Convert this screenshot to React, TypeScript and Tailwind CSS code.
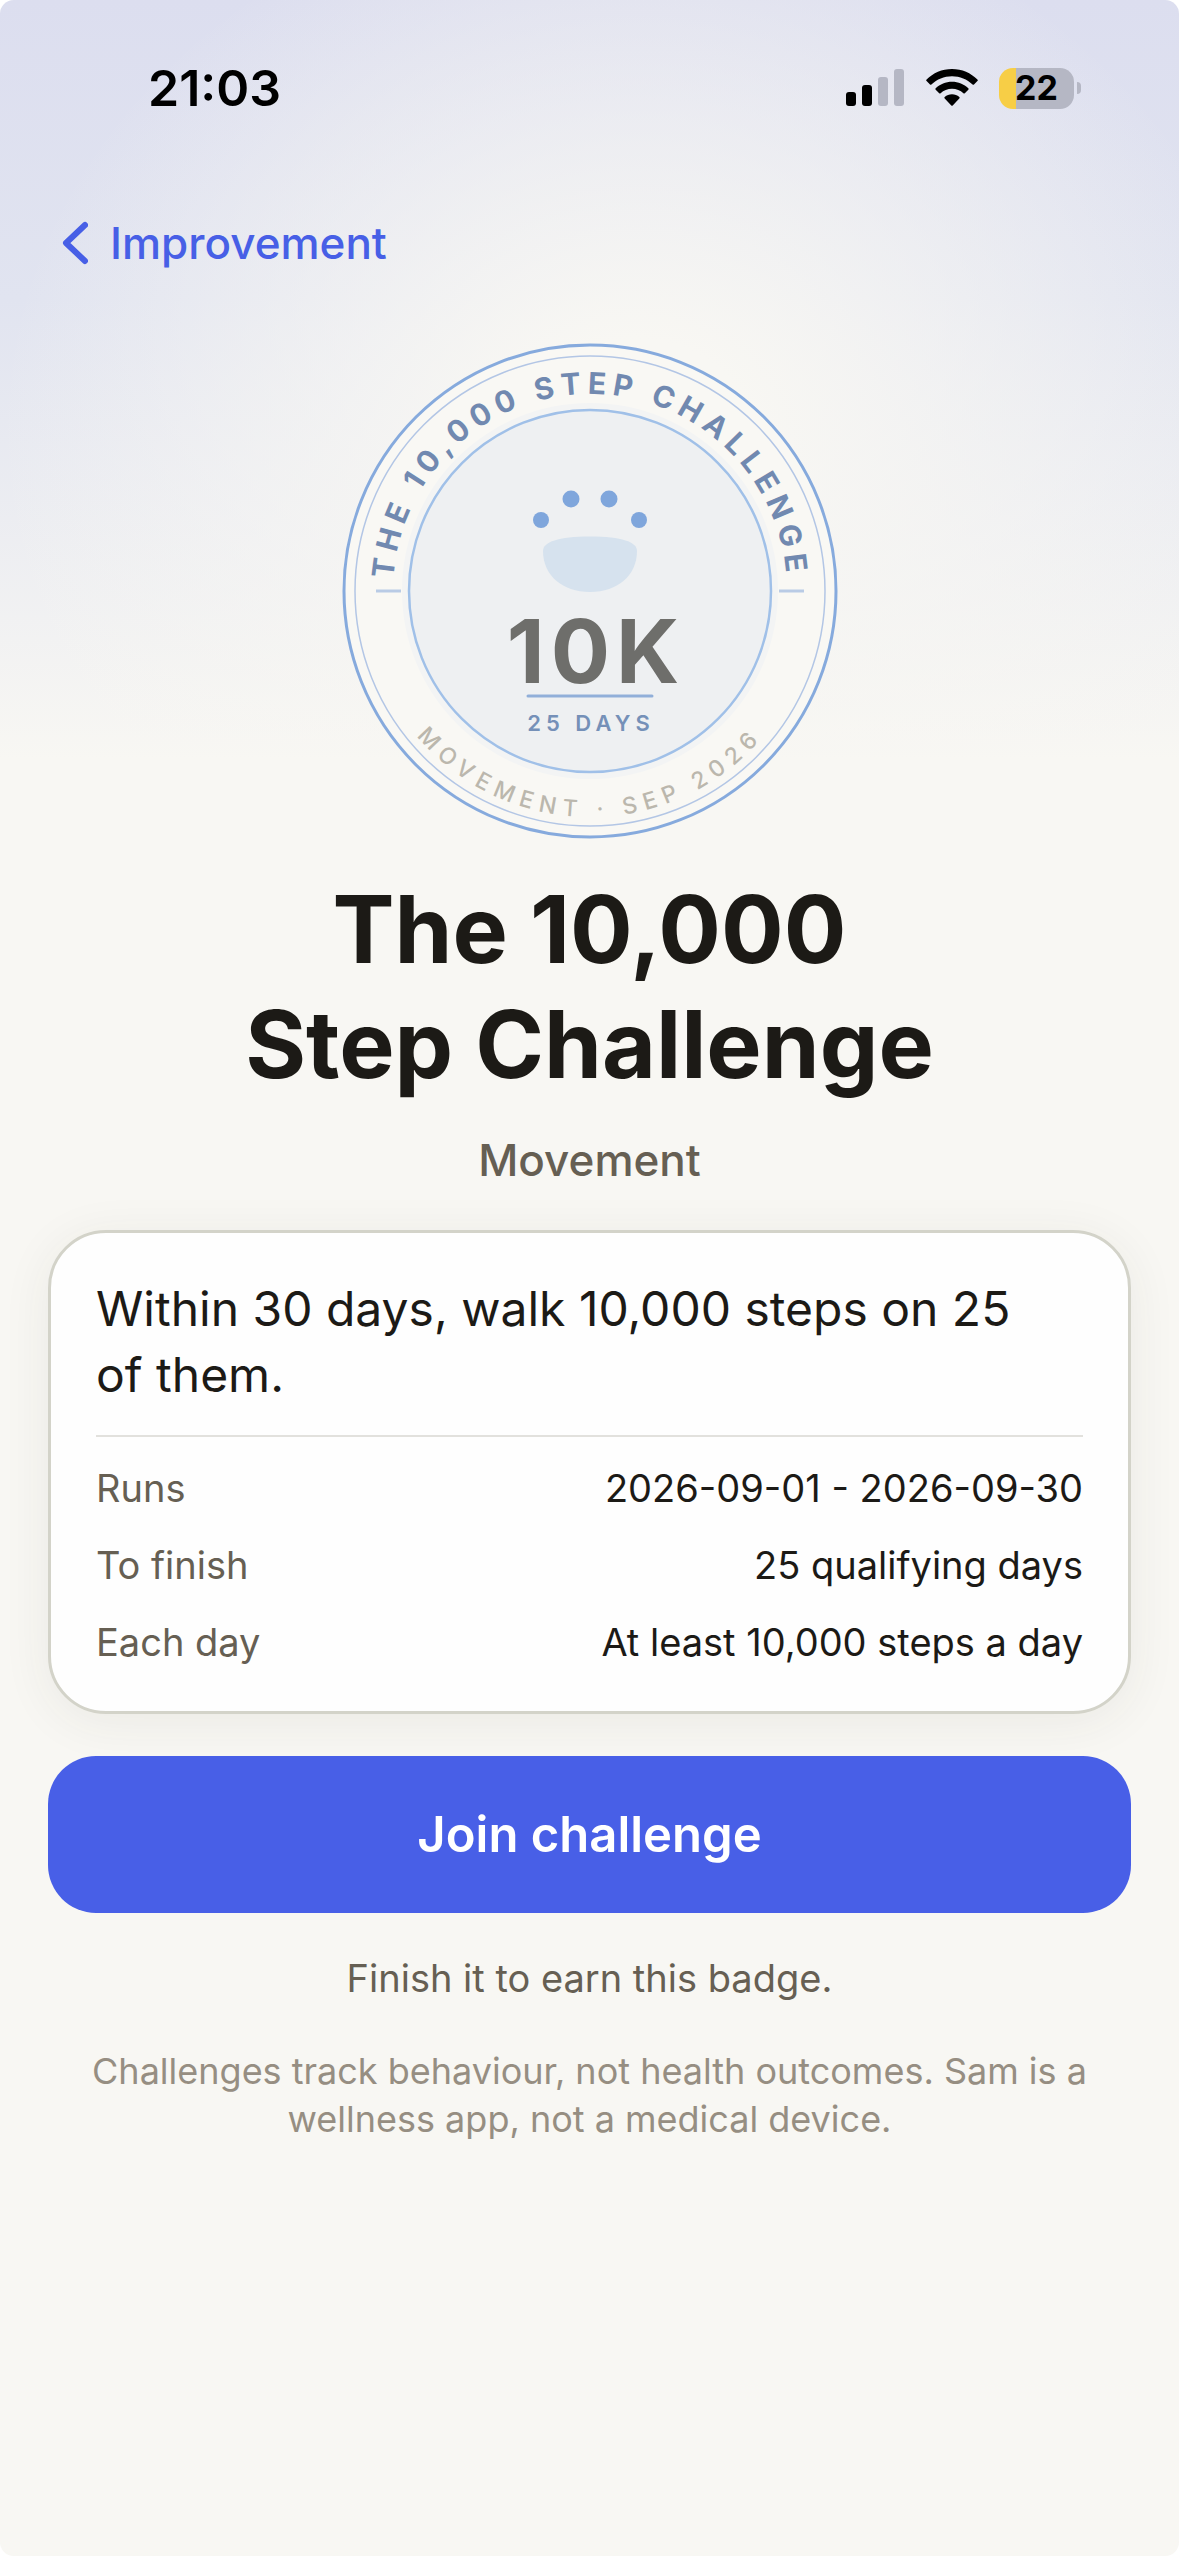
const rows = [
  { label: "Runs", value: "2026-09-01 - 2026-09-30" },
  { label: "To finish", value: "25 qualifying days" },
  { label: "Each day", value: "At least 10,000 steps a day" },
];

function StatusIcons() {
  return (
    <div className="flex items-center">
      <svg className="h-[38px] w-[60px]" viewBox="0 0 60 38" aria-hidden="true">
        <rect x="0" y="23" width="10" height="14" rx="3" fill="#000" />
        <rect x="16" y="16" width="10" height="21" rx="3" fill="#000" />
        <rect x="32" y="8" width="10" height="29" rx="3" fill="#b5b7c4" />
        <rect x="48" y="0" width="10" height="37" rx="3" fill="#b5b7c4" />
      </svg>
      <svg className="ml-5 h-[38px] w-[52px]" viewBox="0 0 52 38" aria-hidden="true">
        <path d="M26 0C16 0 7 4 0.600 10.600a1 1 0 0 0 0 1.500l3.400 3.400a1 1 0 0 0 1.400 0C11 10.200 18 7.200 26 7.200s15 3 20.600 8.300a1 1 0 0 0 1.400 0l3.400-3.400a1 1 0 0 0 0-1.500C45 4 36 0 26 0Z" />
        <path d="M26 12.700c-6.300 0-12 2.500-16.300 6.500a1 1 0 0 0 0 1.500l3.500 3.500a1 1 0 0 0 1.400 0c3-2.800 7-4.400 11.400-4.400s8.400 1.600 11.400 4.400a1 1 0 0 0 1.400 0l3.500-3.500a1 1 0 0 0 0-1.500C38 15.200 32.300 12.700 26 12.700Z" />
        <path d="M26 25.300c-2.800 0-5.300 1-7.300 2.700a1 1 0 0 0 0 1.500l6.600 7a1 1 0 0 0 1.400 0l6.600-7a1 1 0 0 0 0-1.500c-2-1.700-4.500-2.700-7.300-2.700Z" />
      </svg>
      <div className="ml-[21px] flex items-center gap-[3px]">
        <div className="flex h-[41px] w-[75px] items-center justify-center rounded-[14px] bg-[linear-gradient(90deg,#f7ce46_17px,#b5b7c4_17px)] text-[34px] leading-none font-bold">
          22
        </div>
        <div className="h-3 w-1 rounded-r-full bg-[#b5b7c4]" />
      </div>
    </div>
  );
}

function Badge() {
  return (
    <svg className="h-[496px] w-[496px]" viewBox="0 0 496 496" role="img" aria-label="The 10,000 Step Challenge badge">
      <defs>
        <path id="arc-top" d="M51 258V248A197 197 0 0 1 445 248V258" />
        <path id="arc-bottom" d="M22 248A226 226 0 0 0 474 248" />
      </defs>
      <circle cx="248" cy="248" r="246" fill="#f9f8f4" stroke="#86aadd" strokeWidth="3" />
      <circle cx="248" cy="248" r="235" fill="none" stroke="#b3c6e5" strokeWidth="1.500" />
      <circle cx="248" cy="248" r="188" fill="#f3f4f4" />
      <circle cx="248" cy="248" r="181" fill="#eef0f2" stroke="#a0c0e8" strokeWidth="2.500" />
      <path d="M34 248H59M437 248H462" stroke="#b9cbe5" strokeWidth="3" />
      <g fill="#7fa6dc">
        <circle cx="199" cy="177" r="8" />
        <circle cx="229" cy="156" r="8.500" />
        <circle cx="267" cy="156" r="8.500" />
        <circle cx="297" cy="177" r="8" />
      </g>
      <path d="M201 208C201 199 216 193.500 248 193.500S295 199 295 208C295 232 276 249 248 249S201 232 201 208Z" fill="#d6e2ee" />
      <text x="254" y="340" textAnchor="middle" className="fill-[#6e6e6b] text-[88px] font-bold tracking-[6px]">10K</text>
      <path d="M186 353H310" stroke="#91afd9" strokeWidth="3" strokeLinecap="round" />
      <text x="249" y="388" textAnchor="middle" className="fill-[#7590b8] text-[22px] font-semibold tracking-[5px]">25 DAYS</text>
      <text className="fill-[#7189b0] text-[30px] font-bold tracking-[6px]">
        <textPath href="#arc-top" startOffset="50%" textAnchor="middle">THE 10,000 STEP CHALLENGE</textPath>
      </text>
      <text className="fill-[#bbb7ad] text-[23px] font-medium tracking-[7px]">
        <textPath href="#arc-bottom" startOffset="50%" textAnchor="middle">MOVEMENT · SEP 2026</textPath>
      </text>
    </svg>
  );
}

export default function App() {
  return (
    <div className="min-h-screen bg-white font-['Inter',sans-serif] text-[#1c1a16]">
      <div className="min-h-screen overflow-hidden rounded-[14px] bg-[#f8f7f3] bg-[radial-gradient(ellipse_640px_560px_at_54%_440px,#f8f7f3_18%,#f8f7f300_100%),linear-gradient(180deg,#dcdeef_0px,#e1e4f0_300px,#f8f7f3_760px)]">
        <header className="flex h-[176px] items-center justify-between pr-[98px] pl-[148px] text-black">
          <div className="text-[50px] leading-none font-semibold">21:03</div>
          <StatusIcons />
        </header>

        <nav className="px-[61px] pt-9">
          <a href="#improvement" className="inline-flex h-[62px] items-center gap-[22px] text-[44px] font-medium text-[#475fe6]">
            <svg className="h-[44px] w-[27px]" viewBox="0 0 27 44" fill="none" stroke="currentColor" strokeWidth="6" strokeLinecap="round" strokeLinejoin="round" aria-hidden="true">
              <path d="M24 4 5 22l19 18" />
            </svg>
            Improvement
          </a>
        </nav>

        <main className="flex flex-col px-12 pt-[69px]">
          <div className="flex justify-center">
            <Badge />
          </div>
          <h1 className="mt-[33px] text-center text-[93px] leading-[115px] font-bold">
            The 10,000
            <br />
            Step Challenge
          </h1>
          <p className="mt-7 text-center text-[44px] leading-[60px] font-medium text-[#665f53]">Movement</p>

          <section className="mt-10 rounded-[58px] border-[3px] border-[#d3d3c9] bg-[#fefefe] px-[45px] pt-[43px] pb-10 shadow-[0_8px_50px_rgba(50,50,40,0.07)]">
            <p className="text-[48px] leading-[66px]">
              Within 30 days, walk 10,000 steps on 25
              <br />
              of them.
            </p>
            <dl className="mt-[27px] flex flex-col gap-5 border-t-2 border-[#e2e1dd] pt-[23px] text-[38px] leading-[57px]">
              {rows.map((row) => (
                <div key={row.label} className="flex justify-between">
                  <dt className="text-[#665f53]">{row.label}</dt>
                  <dd>{row.value}</dd>
                </div>
              ))}
            </dl>
          </section>

          <button type="button" className="mt-[42px] h-[157px] rounded-[48px] bg-[#485fe7] text-[49px] font-semibold text-white">
            Join challenge
          </button>
          <p className="mt-9 text-center text-[38px] leading-[58px] text-[#665f53]">Finish it to earn this badge.</p>
          <p className="mt-10 px-8 text-center text-[36px] leading-[48px] text-[#968e82]">
            Challenges track behaviour, not health outcomes. Sam is a wellness app, not a medical device.
          </p>
        </main>
      </div>
    </div>
  );
}
